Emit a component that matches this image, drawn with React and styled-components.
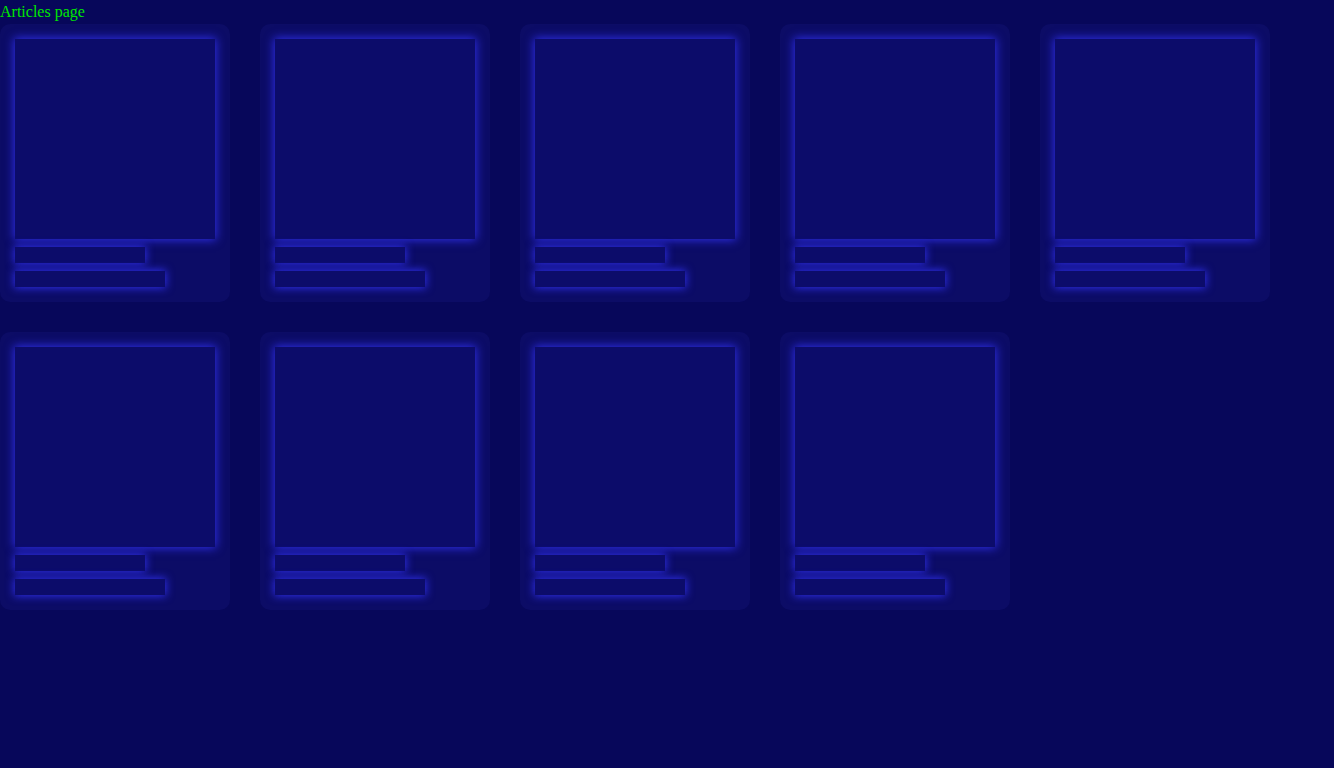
import React from "react";
import styled, { createGlobalStyle } from "styled-components";

const Global = createGlobalStyle`
  html, body { margin: 0; padding: 0; background: #07075a; }
  body { font-family: "Liberation Serif", "Times New Roman", serif; font-size: 16px; }
`;

const Title = styled.div`
  color: #00e600;
  line-height: 24px;
  height: 24px;
`;

const Grid = styled.div`
  display: flex;
  flex-wrap: wrap;
  gap: 30px;
  width: 1300px;
`;

const Card = styled.div`
  width: 230px;
  box-sizing: border-box;
  padding: 15px;
  background: #0c0c66;
  border-radius: 10px;
  display: flex;
  flex-direction: column;
  gap: 8px;
`;

const Glow = styled.div`
  background: #0c0c6a;
  box-shadow: 0 0 9px 1px #2e2ee8;
`;

const Thumb = styled(Glow)`
  width: 200px;
  height: 200px;
`;

const Bar = styled(Glow)`
  width: ${(p) => p.$w}px;
  height: 16px;
`;

export default function App() {
  return (
    <>
      <Global />
      <Title>Articles page</Title>
      <Grid>
        {Array.from({ length: 9 }).map((_, i) => (
          <Card key={i}>
            <Thumb />
            <Bar $w={130} />
            <Bar $w={150} />
          </Card>
        ))}
      </Grid>
    </>
  );
}
